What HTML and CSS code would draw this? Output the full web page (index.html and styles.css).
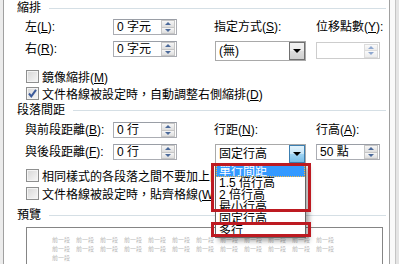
FILE: index.html
```html
<!DOCTYPE html>
<html lang="zh-Hant">
<head>
    <meta charset="UTF-8">
    <meta name="viewport" content="width=device-width, initial-scale=1.0">
    <title>段落</title>
    <link rel="stylesheet" href="styles.css">
</head>
<body>
    <div class="frame">
        <div class="edge-left"></div>
        <div class="pane">
            <div class="group-title"><span>縮排</span><i class="rule"></i></div>
            <div class="fields">
                <span class="lbl">左(<u>L</u>):</span>
                <div class="spin"><span class="val">0 字元</span><span class="spin-btn"><b class="up"></b><b class="down"></b></span></div>
                <span class="lbl c-mid">指定方式(<u>S</u>):</span>
                <span class="lbl c-right">位移點數(<u>Y</u>):</span>

                <span class="lbl">右(<u>R</u>):</span>
                <div class="spin"><span class="val">0 字元</span><span class="spin-btn"><b class="up"></b><b class="down"></b></span></div>
                <div class="combo c-mid"><span class="val">(無)</span><span class="drop"><b></b></span></div>
                <div class="spin off c-right low"><span class="val"></span><span class="spin-btn"><b class="up"></b><b class="down"></b></span></div>
            </div>
            <div class="checks first">
                <div class="check"><span class="box"></span><span>鏡像縮排(<u>M</u>)</span></div>
                <div class="check"><span class="box"><svg width="11" height="11" viewBox="0 0 11 11"><path d="M2 5.5 L4.3 8.3 L9 1.8" stroke="#3b5a9a" stroke-width="2" fill="none"/></svg></span><span>文件格線被設定時，自動調整右側縮排(<u>D</u>)</span></div>
            </div>

            <div class="group-title"><span>段落間距</span><i class="rule"></i></div>
            <div class="fields second">
                <span class="lbl">與前段距離(<u>B</u>):</span>
                <div class="spin"><span class="val">0 行</span><span class="spin-btn"><b class="up"></b><b class="down"></b></span></div>
                <span class="lbl c-mid">行距(<u>N</u>):</span>
                <span class="lbl c-right">行高(<u>A</u>):</span>

                <span class="lbl">與後段距離(<u>F</u>):</span>
                <div class="spin"><span class="val">0 行</span><span class="spin-btn"><b class="up"></b><b class="down"></b></span></div>
                <div class="combo c-mid"><span class="val">固定行高</span><span class="drop hot"><b></b></span></div>
                <div class="spin c-right"><span class="val">50 點</span><span class="spin-btn"><b class="up"></b><b class="down"></b></span></div>
            </div>
            <!-- 後半段被下拉選單蓋住 -->
            <div class="checks">
                <div class="check"><span class="box"></span><span class="cut">相同樣式的各段落之間不要加上間距(<u>C</u>)</span></div>
                <div class="check"><span class="box"></span><span class="cut">文件格線被設定時，貼齊格線(<u>W</u>)</span></div>
            </div>

            <div class="group-title small"><span>預覽</span><i class="rule"></i></div>
            <div class="preview">
                <div class="lines">
                    <span>前一段</span><span>前一段</span><span>前一段</span><span>前一段</span><span>前一段</span><span>前一段</span>
                    <span>前一段</span><span>前一段</span><span>前一段</span><span>前一段</span><span>前一段</span><span>前一段</span>
                    <span>前一段</span><span>前一段</span><span>前一段</span><span>前一段</span><span>前一段</span><span>前一段</span>
                    <span>前一段</span><span>前一段</span><span>前一段</span><span>前一段</span><span>前一段</span><span>前一段</span>
                    <span>前一段</span>
                </div>
            </div>

            <!-- 下拉選單 -->
            <ul class="list">
                <li class="on">單行間距</li>
                <li>1.5 倍行高</li>
                <li>2 倍行高</li>
                <li>最小行高</li>
                <li>固定行高</li>
                <li>多行</li>
            </ul>
            <div class="mark mark-a"></div>
            <div class="mark mark-b"></div>
        </div>
        <div class="edge-right"></div>
    </div>
</body>
</html>
```

FILE: styles.css
```css
* {
    margin: 0;
    padding: 0;
    box-sizing: border-box;
}

body {
    width: 399px;
    height: 264px;
    overflow: hidden;
    background-color: #f0f0f0;
    font-family: "Liberation Sans", "Noto Sans CJK TC", sans-serif;
    font-size: 12px;
    color: #000;
}

u {
    text-decoration: underline;
    text-underline-offset: 1px;
}

.frame {
    display: flex;
    height: 264px;
}

.edge-left {
    width: 3px;
    background-color: #ececec;
}

.pane {
    position: relative;
    width: 387px;
    background-color: #fff;
    border-left: 1px solid #a0a0a0;
    border-right: 1px solid #a0a0a0;
}

.edge-right {
    flex: 1;
    background: linear-gradient(to right, #f9f9f9 5px, #c4c4c4 5px, #c4c4c4 6px, #e4e4e4 6px);
}

/* 標題 */
.group-title {
    display: flex;
    align-items: center;
    gap: 8px;
    height: 16px;
    line-height: 16px;
    padding: 0 3px 0 13px;
}

.group-title.small {
    height: 14px;
    line-height: 14px;
    margin-top: 6px;
}

.rule {
    flex: 1;
    height: 1px;
    background-color: #d5dfe5;
}

/* 欄位 */
.fields {
    display: grid;
    grid-template-columns: 88px 64px 38px 91px 10px 64px;
    grid-template-rows: 16px 20px;
    row-gap: 6px;
    margin-top: 3px;
    padding-left: 21px;
    align-items: start;
}

.fields.second {
    margin-top: 4px;
}

.lbl {
    line-height: 16px;
    white-space: nowrap;
}

.c-mid {
    grid-column: 4;
}

.c-right {
    grid-column: 6;
}

.lbl.c-mid {
    margin-left: -1px;
}

.spin {
    display: flex;
    align-items: center;
    height: 16px;
    border: 1px solid #abadb3;
    border-top-color: #9a9ea6;
    background-color: #fff;
}

.spin.low {
    margin-top: 1px;
    height: 17px;
}

.spin .val {
    flex: 1;
    padding-left: 3px;
    line-height: 14px;
    white-space: nowrap;
}

.spin-btn {
    display: flex;
    flex-direction: column;
    width: 14px;
    height: 14px;
    margin-right: 1px;
}

.spin-btn b {
    flex: 1;
    display: flex;
    align-items: center;
    justify-content: center;
    border: 1px solid #c6c6c6;
    background: linear-gradient(#f6f6f6, #dedede);
}

.spin-btn b + b {
    border-top: none;
}

.spin-btn b::after {
    content: "";
    border-left: 3px solid transparent;
    border-right: 3px solid transparent;
}

.spin-btn .up::after {
    border-bottom: 3px solid #4c6a9a;
}

.spin-btn .down::after {
    border-top: 3px solid #4c6a9a;
}

.spin.off {
    border-color: #cdcdcd;
}

.spin.off .spin-btn b {
    border-color: #dcdcdc;
    background: linear-gradient(#fafafa, #ececec);
}

.spin.off .up::after {
    border-bottom-color: #8fa8cf;
}

.spin.off .down::after {
    border-top-color: #8fa8cf;
}

.combo {
    display: flex;
    height: 20px;
    border: 1px solid #a9a9a9;
    background-color: #fff;
}

.combo .val {
    flex: 1;
    padding-left: 3px;
    line-height: 18px;
    white-space: nowrap;
}

.drop {
    display: flex;
    align-items: center;
    justify-content: center;
    width: 16px;
    border: 1px solid #707070;
    background: linear-gradient(#f2f2f2, #ebebeb 50%, #dddddd 50%, #cfcfcf);
}

.drop b {
    border-left: 4px solid transparent;
    border-right: 4px solid transparent;
    border-top: 4px solid #000;
}

.drop.hot {
    border-color: #3c7fb1;
    background: linear-gradient(#e3f3fc, #c4e5f8 50%, #9fd4f3 50%, #78bde8);
}

/* 核取方塊 */
.checks {
    margin-top: 2px;
    padding-left: 22px;
}

.checks.first {
    margin-top: 7px;
}

.check {
    display: flex;
    align-items: center;
    gap: 3px;
    height: 18px;
    white-space: nowrap;
}

.checks.first .check {
    height: 17px;
}

.check .cut {
    width: 170px;
    overflow: hidden;
}

.box {
    display: flex;
    align-items: center;
    justify-content: center;
    flex: none;
    width: 13px;
    height: 13px;
    border: 1px solid #8e8f8f;
    background: linear-gradient(135deg, #d6d6d6, #f7f7f7);
    box-shadow: inset 0 0 0 1px #f4f4f4;
}

/* 預覽 */
.preview {
    width: 357px;
    height: 60px;
    margin: 5px 0 0 22px;
    padding: 8px 0 0 25px;
    border: 1px solid #858585;
    border-bottom: none;
}

.lines {
    display: flex;
    flex-wrap: wrap;
    width: 288px;
}

.lines span {
    width: 18px;
    margin-right: 6px;
    font-size: 6px;
    line-height: 9px;
    color: #b8b8b8;
    white-space: nowrap;
}

/* 下拉選單 */
.list {
    position: absolute;
    left: 211px;
    top: 164px;
    width: 91px;
    list-style: none;
    border: 1px solid #646464;
    background-color: #fff;
    box-shadow: 3px 3px 5px rgba(0, 0, 0, 0.35);
}

.list li {
    height: 12px;
    line-height: 12px;
    padding-left: 3px;
    white-space: nowrap;
}

.list .on {
    background-color: #3399ff;
    color: #fff;
    outline: 1px dotted #f3b84a;
    outline-offset: -1px;
}

.mark {
    position: absolute;
    left: 207px;
    width: 100px;
    border: 3px solid #bd1a21;
}

.mark-a {
    top: 163px;
    height: 49px;
}

.mark-b {
    top: 222px;
    height: 15px;
}
```
